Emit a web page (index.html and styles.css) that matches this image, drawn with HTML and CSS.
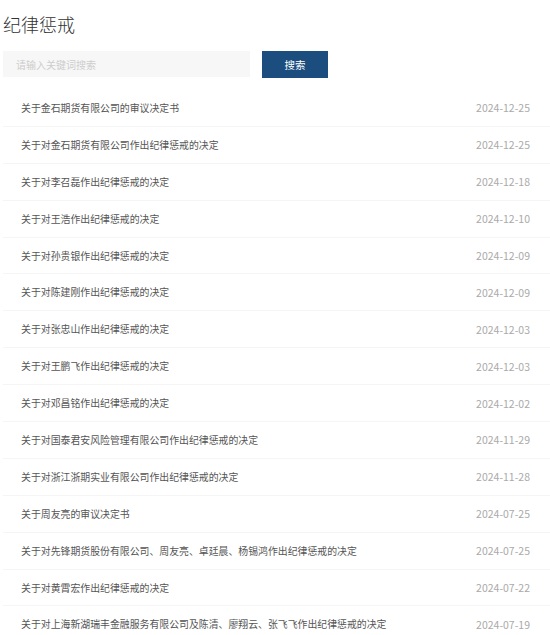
FILE: index.html
```html
<!DOCTYPE html>
<html lang="zh-CN">
<head>
  <meta charset="UTF-8" />
  <title>纪律惩戒</title>
  <link rel="stylesheet" href="styles.css">
</head>
<body>
  <div class="page">
    <h1>纪律惩戒</h1>
    <div class="search">
      <input class="search-input" type="text" placeholder="请输入关键词搜索">
      <button class="search-btn">搜索</button>
    </div>
    <ul class="list">
      <li><a href="#">关于金石期货有限公司的审议决定书</a><span class="date">2024-12-25</span></li>
      <li><a href="#">关于对金石期货有限公司作出纪律惩戒的决定</a><span class="date">2024-12-25</span></li>
      <li><a href="#">关于对李召磊作出纪律惩戒的决定</a><span class="date">2024-12-18</span></li>
      <li><a href="#">关于对王浩作出纪律惩戒的决定</a><span class="date">2024-12-10</span></li>
      <li><a href="#">关于对孙贵银作出纪律惩戒的决定</a><span class="date">2024-12-09</span></li>
      <li><a href="#">关于对陈建刚作出纪律惩戒的决定</a><span class="date">2024-12-09</span></li>
      <li><a href="#">关于对张忠山作出纪律惩戒的决定</a><span class="date">2024-12-03</span></li>
      <li><a href="#">关于对王鹏飞作出纪律惩戒的决定</a><span class="date">2024-12-03</span></li>
      <li><a href="#">关于对邓昌铭作出纪律惩戒的决定</a><span class="date">2024-12-02</span></li>
      <li><a href="#">关于对国泰君安风险管理有限公司作出纪律惩戒的决定</a><span class="date">2024-11-29</span></li>
      <li><a href="#">关于对浙江浙期实业有限公司作出纪律惩戒的决定</a><span class="date">2024-11-28</span></li>
      <li><a href="#">关于周友亮的审议决定书</a><span class="date">2024-07-25</span></li>
      <li><a href="#">关于对先锋期货股份有限公司、周友亮、卓廷晨、杨锡鸿作出纪律惩戒的决定</a><span class="date">2024-07-25</span></li>
      <li><a href="#">关于对黄霄宏作出纪律惩戒的决定</a><span class="date">2024-07-22</span></li>
      <li><a href="#">关于对上海新湖瑞丰金融服务有限公司及陈清、廖翔云、张飞飞作出纪律惩戒的决定</a><span class="date">2024-07-19</span></li>
    </ul>
  </div>
</body>
</html>
```

FILE: styles.css
```css
body {
  margin: 0;
  background: #fff;
  color: #333;
  font-family: "Noto Sans CJK SC", "Noto Sans", sans-serif;
}
.page {
  padding: 0 0 0 3px;
}
h1 {
  margin: 14px 0 0;
  font-size: 18px;
  line-height: 20px;
  font-weight: 300;
  color: #333;
}
.search {
  display: flex;
  gap: 12px;
  margin-top: 17px;
}
.search-input {
  width: 247px;
  height: 26px;
  box-sizing: border-box;
  border: none;
  outline: none;
  background: #f7f7f7;
  padding: 0 13px;
  font-family: inherit;
  font-size: 10px;
  color: #333;
}
.search-input::placeholder {
  color: #cdcdcd;
}
.search-btn {
  width: 66px;
  height: 27px;
  border: none;
  background: #1b4d7e;
  color: #fff;
  font-family: inherit;
  font-size: 10.5px;
  cursor: pointer;
}
.list {
  list-style: none;
  margin: 12px 0 0;
  padding: 0;
}
.list li {
  display: flex;
  align-items: center;
  justify-content: space-between;
  height: 35.9px;
  padding: 0 20px 0 18px;
  border-bottom: 1px solid #f5f5f5;
  font-size: 9.9px;
}
.list a {
  color: #555;
  text-decoration: none;
}
.date {
  color: #aaa;
  font-size: 10.5px;
}
```
